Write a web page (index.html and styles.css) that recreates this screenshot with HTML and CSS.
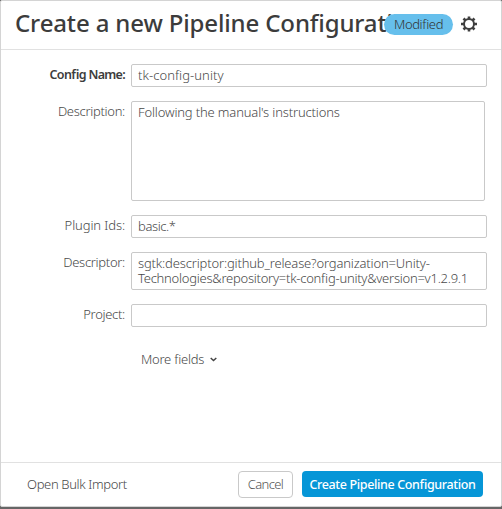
FILE: index.html
```
<!DOCTYPE html>
<html lang="en">
<head>
<meta charset="utf-8">
<title>Create a new Pipeline Configuration</title>
<link rel="stylesheet" href="styles.css">
</head>
<body>
<main class="dialog">
  <header class="header">
    <h1 class="title">Create a new Pipeline Configuration</h1>
    <span class="badge">Modified</span>
    <svg class="gear" viewBox="0 0 16 16" width="16" height="16"><g stroke="#3f3f3f" fill="none"><circle cx="8" cy="8" r="5" stroke-width="2"/><path stroke-width="2.6" d="M8 .5v2.5M8 13v2.5M0 8h3M13 8h3M2.5 2.5l2 2M11.5 11.5l2 2M2.5 13.5l2-2M11.5 4.5l2-2"/></g></svg>
  </header>
  <form class="form">
    <div class="row"><label class="label required">Config Name:</label><div class="field name">tk-config-unity</div></div>
    <div class="row"><label class="label">Description:</label><div class="field area">Following the manual's instructions</div></div>
    <div class="row"><label class="label plugin">Plugin Ids:</label><div class="field ids">basic.*</div></div>
    <div class="row"><label class="label">Descriptor:</label><div class="field multi"><span class="line1">sgtk:descriptor:github_release?organization=Unity-</span><br><span class="line2">Technologies&amp;repository=tk-config-unity&amp;version=v1.2.9.1</span></div></div>
    <div class="row"><label class="label">Project:</label><div class="field"></div></div>
    <div class="more"><span>More fields</span><svg width="7" height="5" viewBox="0 0 7 5"><path d="M.7 1l2.8 2.5L6.3 1" fill="none" stroke="#444" stroke-width="1.5"/></svg></div>
  </form>
  <footer class="footer">
    <span class="bulk">Open Bulk Import</span>
    <button class="cancel">Cancel</button>
    <button class="create">Create Pipeline Configuration</button>
  </footer>
</main>
</body>
</html>
```
FILE: styles.css
```
* { box-sizing: border-box; }
body { margin: 0; height: 509px; overflow: hidden; background: #666; font: 350 13px/15px "Noto Sans", sans-serif; font-feature-settings: "liga"; color: #484848; }
.dialog { height: 507px; display: flex; flex-direction: column; background: #fff; border: 1px solid #d4d4d4; border-radius: 2px; }
.header { position: relative; height: 49px; flex: none; border-bottom: 1px solid #e1e1e1; }
.title { margin: 0; padding: 5px 0 0 14px; font-size: 24px; line-height: 33px; font-weight: 500; letter-spacing: -.14px; color: #3c3c3c; white-space: nowrap; }
.badge { position: absolute; left: 383px; top: 13px; width: 69px; height: 21px; border-radius: 11px; background: #66bfec; color: #333; text-align: center; line-height: 20px; letter-spacing: -.4px; }
.gear { position: absolute; left: 460px; top: 15px; }
.form { flex: 1; padding: 14px 14px 0 0; }
.row { display: flex; margin-bottom: 14px; }
.label { width: 124px; margin-right: 6px; padding-top: 3px; text-align: right; white-space: nowrap; letter-spacing: -.3px; }
.plugin { letter-spacing: -.1px; }
.required { font-size: 12.5px; font-weight: 600; letter-spacing: -.68px; color: #3c3c3c; }
.field { width: 356px; min-height: 23px; padding: 3px 7px 2px 6px; border: 1px solid #c9c9c9; border-radius: 2px; white-space: nowrap; }
.name { letter-spacing: .07px; }
.area { width: 354px; height: 100px; letter-spacing: -.15px; }
.ids { letter-spacing: -.4px; }
.multi { height: 38px; }
.line1 { letter-spacing: -.16px; }
.line2 { letter-spacing: -.25px; }
.more { display: flex; align-items: center; gap: 6px; margin-top: 25px; padding-left: 140px; letter-spacing: -.25px; }
.footer { display: flex; align-items: center; height: 44px; flex: none; padding: 0 18px 0 26px; border-top: 1px solid #e1e1e1; }
.bulk { margin-right: auto; letter-spacing: -.35px; }
button { height: 27px; padding: 0; border-radius: 4px; font: inherit; color: #555; white-space: nowrap; }
.cancel { width: 55px; background: #fff; border: 1px solid #c9c9c9; margin-right: 9px; letter-spacing: -.6px; }
.create { width: 181px; height: 26px; margin-bottom: 1px; background: #0696d7; border: 0; color: #fff; font-size: 12.5px; font-weight: 500; letter-spacing: -.36px; }
```
